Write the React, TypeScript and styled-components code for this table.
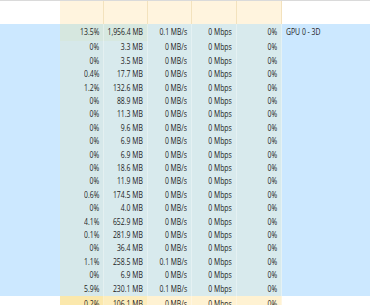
import React from 'react';
import styled, { createGlobalStyle } from 'styled-components';

const GlobalStyle = createGlobalStyle`
  html, body {
    margin: 0;
    padding: 0;
    background: #ffffff;
    overflow: hidden;
  }
  body {
    font-family: "Open Sans", "Noto Sans", "Liberation Sans", sans-serif;
    font-size: 8.7px;
    color: #1c1c1c;
  }
`;

const COLUMNS = '60px 44px 44px 44px 45px 45px 1fr';

const Table = styled.div`
  width: 370px;
  height: 305px;
  overflow: hidden;
  border-top: 1px solid #dadada;
  box-sizing: border-box;
`;

const HeaderRow = styled.div`
  display: grid;
  grid-template-columns: ${COLUMNS};
  height: 23px;
`;

const HeaderCell = styled.div<{ $blank?: boolean }>`
  background: ${p => (p.$blank ? '#ffffff' : '#fff4de')};
  border-right: 1px solid ${p => (p.$blank ? 'transparent' : '#f3e2bd')};
`;

const Body = styled.div`
  background: #cce8ff;
`;

const Row = styled.div<{ $h: number; $bg?: string }>`
  display: grid;
  grid-template-columns: ${COLUMNS};
  height: ${p => p.$h}px;
  background: ${p => p.$bg ?? 'transparent'};
`;

const Blank = styled.div``;

const Cell = styled.div<{ $bg: string }>`
  display: flex;
  align-items: center;
  justify-content: flex-end;
  padding-right: 4px;
  background: ${p => p.$bg};
  border-right: 1px solid rgba(255, 255, 255, 0.35);
  white-space: nowrap;
  line-height: 1;
`;

// the reference face is narrow, so squeeze the glyphs a little
const Text = styled.span<{ $origin?: string }>`
  display: inline-block;
  transform: scaleX(0.79);
  transform-origin: ${p => p.$origin ?? 'right'} center;
`;

const Label = styled.div`
  display: flex;
  align-items: center;
  padding-left: 4px;
  white-space: nowrap;
  line-height: 1;
`;

type Proc = [string, string, string, string, string];

const rows: Proc[] = [
  ['0%', '3.3 MB', '0 MB/s', '0 Mbps', '0%'],
  ['0%', '3.5 MB', '0 MB/s', '0 Mbps', '0%'],
  ['0.4%', '17.7 MB', '0 MB/s', '0 Mbps', '0%'],
  ['1.2%', '132.6 MB', '0 MB/s', '0 Mbps', '0%'],
  ['0%', '88.9 MB', '0 MB/s', '0 Mbps', '0%'],
  ['0%', '11.3 MB', '0 MB/s', '0 Mbps', '0%'],
  ['0%', '9.6 MB', '0 MB/s', '0 Mbps', '0%'],
  ['0%', '6.9 MB', '0 MB/s', '0 Mbps', '0%'],
  ['0%', '6.9 MB', '0 MB/s', '0 Mbps', '0%'],
  ['0%', '18.6 MB', '0 MB/s', '0 Mbps', '0%'],
  ['0%', '11.9 MB', '0 MB/s', '0 Mbps', '0%'],
  ['0.6%', '174.5 MB', '0 MB/s', '0 Mbps', '0%'],
  ['0%', '4.0 MB', '0 MB/s', '0 Mbps', '0%'],
  ['4.1%', '652.9 MB', '0 MB/s', '0 Mbps', '0%'],
  ['0.1%', '281.9 MB', '0 MB/s', '0 Mbps', '0%'],
  ['0%', '36.4 MB', '0 MB/s', '0 Mbps', '0%'],
  ['1.1%', '258.5 MB', '0.1 MB/s', '0 Mbps', '0%'],
  ['0%', '6.9 MB', '0 MB/s', '0 Mbps', '0%'],
  ['5.9%', '230.1 MB', '0.1 MB/s', '0 Mbps', '0%'],
];

const CHILD_BG = '#d8eaed';

export default function App() {
  return (
    <>
      <GlobalStyle />
      <Table>
        <HeaderRow>
          <HeaderCell $blank />
          <HeaderCell />
          <HeaderCell />
          <HeaderCell />
          <HeaderCell />
          <HeaderCell />
          <HeaderCell $blank />
        </HeaderRow>
        <Body>
          <Row $h={17}>
            <Blank />
            <Cell $bg="#d6e7df"><Text>13.5%</Text></Cell>
            <Cell $bg="#d7e8e0"><Text>1,956.4 MB</Text></Cell>
            <Cell $bg={CHILD_BG}><Text>0.1 MB/s</Text></Cell>
            <Cell $bg={CHILD_BG}><Text>0 Mbps</Text></Cell>
            <Cell $bg={CHILD_BG}><Text>0%</Text></Cell>
            <Label><Text $origin="left">GPU 0 - 3D</Text></Label>
          </Row>
          {rows.map((r, i) => (
            <Row key={i} $h={13.42}>
              <Blank />
              <Cell $bg="#d6e8ea"><Text>{r[0]}</Text></Cell>
              {r.slice(1).map((v, j) => (
                <Cell key={j} $bg={CHILD_BG}><Text>{v}</Text></Cell>
              ))}
              <Blank />
            </Row>
          ))}
        </Body>
        <Row $h={17} $bg="#ffffff">
          <Blank />
          <Cell $bg="#fbe8ac"><Text>0.2%</Text></Cell>
          <Cell $bg="#fdedbd"><Text>106.1 MB</Text></Cell>
          <Cell $bg="#fff2d2"><Text>0 MB/s</Text></Cell>
          <Cell $bg="#fff2d2"><Text>0 Mbps</Text></Cell>
          <Cell $bg="#fff2d2"><Text>0%</Text></Cell>
          <Blank />
        </Row>
      </Table>
    </>
  );
}
